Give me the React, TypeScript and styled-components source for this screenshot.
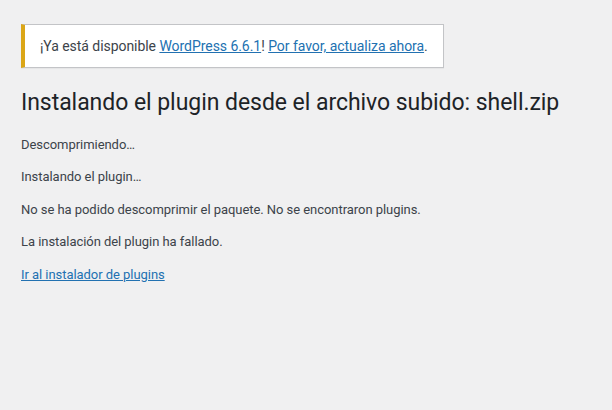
import styled, { createGlobalStyle } from "styled-components";

const GlobalStyle = createGlobalStyle`
  html, body {
    margin: 0;
    padding: 0;
    background: #f0f0f1;
  }

  body {
    color: #3c434a;
    font-family: Roboto, "Noto Sans", sans-serif;
    font-size: 13px;
    line-height: 1.4;
    letter-spacing: -0.05px;
  }
`;

const steps = [
  "Descomprimiendo…",
  "Instalando el plugin…",
  "No se ha podido descomprimir el paquete. No se encontraron plugins.",
  "La instalación del plugin ha fallado.",
];

const App: React.FC = () => {
  return (
    <StyledContent>
      <GlobalStyle />
      <StyledNag>
        ¡Ya está disponible <StyledLink href="#">WordPress 6.6.1</StyledLink>!{" "}
        <StyledLink href="#">Por favor, actualiza ahora</StyledLink>.
      </StyledNag>
      <StyledWrap>
        <StyledTitle>
          Instalando el plugin desde el archivo subido: shell.zip
        </StyledTitle>
        {steps.map((step) => (
          <StyledStep key={step}>{step}</StyledStep>
        ))}
        <StyledStep>
          <StyledLink href="#">Ir al instalador de plugins</StyledLink>
        </StyledStep>
      </StyledWrap>
    </StyledContent>
  );
};

export default App;

const StyledContent = styled.div`
  min-height: 410px;
  padding-left: 19px;
  box-sizing: border-box;
`;

const StyledNag = styled.div`
  display: inline-block;
  margin: 24px 20px 0 2px;
  padding: 11px 15px;
  font-size: 14px;
  line-height: 20px;
  background: #fff;
  border: 1px solid #c3c4c7;
  border-left: 4px solid #dba617;
  box-shadow: 0 1px 1px rgba(0, 0, 0, 0.04);
`;

const StyledWrap = styled.div`
  margin: 10px 20px 0 2px;
`;

const StyledTitle = styled.h1`
  margin: 0;
  padding: 10px 0 4px;
  font-size: 23px;
  font-weight: 400;
  line-height: 1.3;
  color: #1d2327;
  white-space: nowrap;
`;

const StyledStep = styled.p`
  margin: 13px 0;
  font-size: 13px;
  line-height: 1.5;
`;

const StyledLink = styled.a`
  color: #2271b1;
  text-decoration: underline;
`;
